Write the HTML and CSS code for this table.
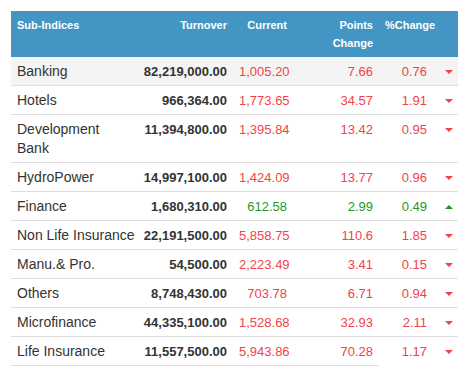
FILE: index.html
```html
<!DOCTYPE html>
<html lang="en">
<head>
  <meta charset="UTF-8" />
  <meta name="viewport" content="width=device-width, initial-scale=1.0" />
  <title>Sub-Indices</title>
  <link rel="stylesheet" href="styles.css">
</head>
<body>
  <div class="wrap">
    <table class="indices">
      <colgroup>
        <col class="c-name"><col class="c-turn"><col class="c-cur"><col class="c-pts"><col class="c-pct"><col class="c-arr">
      </colgroup>
      <thead>
        <tr>
          <th class="left">Sub-Indices</th>
          <th>Turnover</th>
          <th>Current</th>
          <th>Points Change</th>
          <th class="nowrap">%Change</th>
          <th></th>
        </tr>
      </thead>
      <tbody>
        <tr class="hl">
          <td class="name">Banking</td><td class="turn">82,219,000.00</td>
          <td class="cur down">1,005.20</td><td class="pts down">7.66</td><td class="pct down">0.76</td><td class="arr"><span class="tri-down"></span></td>
        </tr>
        <tr>
          <td class="name">Hotels</td><td class="turn">966,364.00</td>
          <td class="cur down">1,773.65</td><td class="pts down">34.57</td><td class="pct down">1.91</td><td class="arr"><span class="tri-down"></span></td>
        </tr>
        <tr>
          <td class="name">Development<br>Bank</td><td class="turn">11,394,800.00</td>
          <td class="cur down">1,395.84</td><td class="pts down">13.42</td><td class="pct down">0.95</td><td class="arr"><span class="tri-down"></span></td>
        </tr>
        <tr>
          <td class="name">HydroPower</td><td class="turn">14,997,100.00</td>
          <td class="cur down">1,424.09</td><td class="pts down">13.77</td><td class="pct down">0.96</td><td class="arr"><span class="tri-down"></span></td>
        </tr>
        <tr>
          <td class="name">Finance</td><td class="turn">1,680,310.00</td>
          <td class="cur up">612.58</td><td class="pts up">2.99</td><td class="pct up">0.49</td><td class="arr"><span class="tri-up"></span></td>
        </tr>
        <tr>
          <td class="name">Non Life Insurance</td><td class="turn">22,191,500.00</td>
          <td class="cur down">5,858.75</td><td class="pts down">110.6</td><td class="pct down">1.85</td><td class="arr"><span class="tri-down"></span></td>
        </tr>
        <tr>
          <td class="name">Manu.&amp; Pro.</td><td class="turn">54,500.00</td>
          <td class="cur down">2,223.49</td><td class="pts down">3.41</td><td class="pct down">0.15</td><td class="arr"><span class="tri-down"></span></td>
        </tr>
        <tr>
          <td class="name">Others</td><td class="turn">8,748,430.00</td>
          <td class="cur down">703.78</td><td class="pts down">6.71</td><td class="pct down">0.94</td><td class="arr"><span class="tri-down"></span></td>
        </tr>
        <tr>
          <td class="name">Microfinance</td><td class="turn">44,335,100.00</td>
          <td class="cur down">1,528.68</td><td class="pts down">32.93</td><td class="pct down">2.11</td><td class="arr"><span class="tri-down"></span></td>
        </tr>
        <tr class="last">
          <td class="name">Life Insurance</td><td class="turn">11,557,500.00</td>
          <td class="cur down">5,943.86</td><td class="pts down">70.28</td><td class="pct down">1.17</td><td class="arr"><span class="tri-down"></span></td>
        </tr>
      </tbody>
    </table>
  </div>
</body>
</html>
```

FILE: styles.css
```css
:root {
  --head: #4396c4;
  --red: #f2424a;
  --green: #1f9a1f;
  --line: #dddddd;
}
* {
  margin: 0; padding: 0; box-sizing: border-box;
}
body {
  background: #fff;
  font-family: 'Liberation Sans', Arial, sans-serif;
  color: #333;
}
.wrap { padding: 11px; }

.indices {
  width: 447px;
  table-layout: fixed;
  border-collapse: collapse;
}
.c-name { width: 130px; }
.c-turn { width: 92px; }
.c-cur { width: 60px; }
.c-pts { width: 86px; }
.c-pct { width: 62px; }
.c-arr { width: 17px; }

.indices th {
  background: var(--head);
  color: #fff;
  font-size: 11px;
  font-weight: bold;
  line-height: 18px;
  padding: 5px 6px;
  text-align: right;
  vertical-align: top;
}
.indices th.left { text-align: left; }
.indices th.nowrap { white-space: nowrap; }

.indices td {
  font-size: 13px;
  line-height: 19px;
  padding: 5px 6px 4px;
  border-bottom: 1px solid var(--line);
  text-align: right;
  vertical-align: top;
}
.indices tr.hl td { background: #f4f4f4; }
.indices td.name {
  font-size: 14px;
  text-align: left;
  white-space: nowrap;
}
.indices td.turn {
  font-weight: bold;
  padding-left: 0;
}
.indices td.pct { padding-right: 14px; }
.indices td.arr {
  text-align: left;
  padding: 13px 0 0 4px;
}
.indices tr.last td.pct,
.indices tr.last td.arr { border-bottom: none; }

.down { color: var(--red); }
.up { color: var(--green); }

.tri-down, .tri-up {
  display: block;
  width: 0; height: 0;
  border-left: 4px solid transparent;
  border-right: 4px solid transparent;
}
.tri-down { border-top: 4px solid var(--red); }
.tri-up { border-bottom: 4px solid var(--green); }
```
